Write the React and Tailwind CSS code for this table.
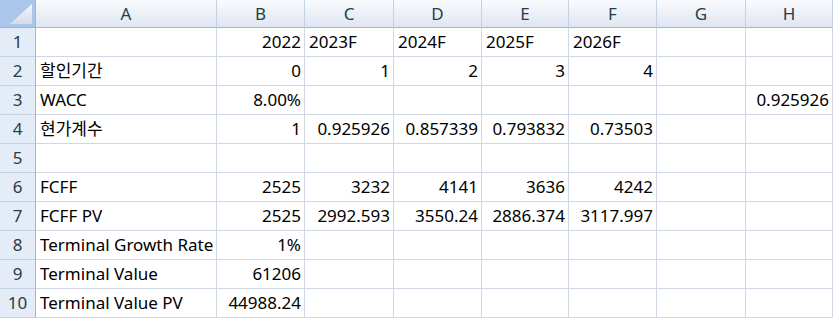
import React from "react";

const COLS = ["A", "B", "C", "D", "E", "F", "G", "H"];

// each row: [A, B, C, D, E, F, G, H]; numbers right aligned, text left aligned
const ROWS = [
  ["", "2022", "2023F", "2024F", "2025F", "2026F", "", ""],
  ["할인기간", 0, 1, 2, 3, 4, "", ""],
  ["WACC", "8.00%", "", "", "", "", "", 0.925926],
  ["현가계수", 1, 0.925926, 0.857339, 0.793832, 0.73503, "", ""],
  ["", "", "", "", "", "", "", ""],
  ["FCFF", 2525, 3232, 4141, 3636, 4242, "", ""],
  ["FCFF PV", 2525, 2992.593, 3550.24, 2886.374, 3117.997, "", ""],
  ["Terminal Growth Rate", "1%", "", "", "", "", "", ""],
  ["Terminal Value", 61206, "", "", "", "", "", ""],
  ["Terminal Value PV", 44988.24, "", "", "", "", "", ""],
];

const isRight = (v) => typeof v === "number" || /^[\d.]+%$/.test(v) || v === "2022";

export default function App() {
  return (
    <div
      className="w-[833px] h-[318px] overflow-hidden bg-white grid grid-cols-[36px_181px_88px_89px_88px_87px_88px_89px_87px] grid-rows-[28px_repeat(10,29px)] text-[17px] text-black"
      style={{ fontFamily: '"Noto Sans", "Noto Sans CJK KR", sans-serif' }}
    >
      {/* corner */}
      <div className="bg-[#abc6ea] border-r border-b border-[#9eb6ce] flex items-end justify-end p-[3px]">
        <svg width="22" height="20" viewBox="0 0 22 20">
          <defs>
            <linearGradient id="tri" x1="0" y1="0" x2="0" y2="1">
              <stop offset="0" stopColor="#f6f8fb" />
              <stop offset="1" stopColor="#d4dbe6" />
            </linearGradient>
          </defs>
          <polygon points="22,0 22,20 0,20" fill="url(#tri)" />
        </svg>
      </div>
      {COLS.map((c) => (
        <div
          key={c}
          className="bg-gradient-to-b from-[#f9fbfd] to-[#dfe6f0] border-r border-b border-r-[#c5d2e2] border-b-[#9eb6ce] flex items-center justify-center text-[#2a3a46]"
        >
          {c}
        </div>
      ))}
      {ROWS.map((row, r) => (
        <React.Fragment key={r}>
          <div className="bg-[#e4ecf7] border-r border-b border-r-[#9eb6ce] border-b-[#c5d2e2] flex items-center justify-center text-[#2a3a46]">
            {r + 1}
          </div>
          {row.map((v, i) => (
            <div
              key={i}
              className={
                "border-r border-b border-[#d0d7e5] flex items-center whitespace-nowrap overflow-visible px-[4px] " +
                (isRight(v) ? "justify-end pr-[3px]" : "justify-start")
              }
            >
              {v}
            </div>
          ))}
        </React.Fragment>
      ))}
    </div>
  );
}
